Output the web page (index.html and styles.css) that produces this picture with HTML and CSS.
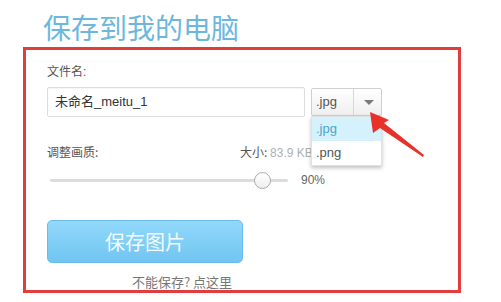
FILE: index.html
```html
<!DOCTYPE html>
<html lang="zh-CN">
<head>
<meta charset="utf-8">
<link rel="stylesheet" href="styles.css">
</head>
<body>
<div class="page">
  <h1 class="title">保存到我的电脑</h1>
  <div class="box">
    <div class="label">文件名:</div>
    <div class="file-row">
      <div class="input">未命名_meitu_1</div>
      <div class="select-wrap">
        <div class="select">
          <span class="select-value">.jpg</span>
          <span class="select-btn"><span class="tri"></span></span>
        </div>
        <ul class="menu">
          <li class="item active">.jpg</li>
          <li class="item">.png</li>
        </ul>
      </div>
    </div>
    <div class="quality-row">
      <span class="quality-label">调整画质:</span>
      <span class="size">大小: <span class="size-val">83.9 KB</span></span>
    </div>
    <div class="slider-row">
      <div class="track"><span class="thumb"></span></div>
      <span class="pct">90%</span>
    </div>
    <button class="save-btn">保存图片</button>
    <div class="help">不能保存? 点这里</div>
  </div>
  <svg class="arrow" width="80" height="60" viewBox="360 95 80 60">
    <polygon points="370,103 389,111 384,114 424,146 423,148 380,119 373,124" fill="#e8312b"/>
  </svg>
</div>
</body>
</html>
```
FILE: styles.css
```css
html, body {
  margin: 0;
  padding: 0;
  background: #ffffff;
}
body {
  width: 501px;
  height: 302px;
  overflow: hidden;
  font-family: "Liberation Sans", "Noto Sans CJK SC", sans-serif;
  color: #555;
}
.page {
  position: relative;
  width: 501px;
  height: 302px;
}
.title {
  margin: 9px 0 0 43px;
  font-family: "Noto Sans CJK SC", sans-serif;
  font-weight: 400;
  font-size: 28px;
  line-height: 36px;
  height: 36px;
  color: #6db7dd;
}
.box {
  margin: 2px 0 0 23px;
  width: 411px;
  height: 240px;
  border: 3px solid #e23c3c;
  padding: 0 0 0 21px;
}
.label {
  margin-top: 14px;
  font-size: 12px;
  line-height: 16px;
  color: #555;
}
.file-row {
  margin-top: 7px;
  display: flex;
  align-items: center;
  gap: 6px;
}
.input {
  width: 249px;
  height: 28px;
  border: 1px solid #ddd;
  border-radius: 2px;
  padding-left: 7px;
  font-size: 13px;
  line-height: 28px;
  color: #333;
  box-shadow: inset 0 1px 1px rgba(0,0,0,0.04);
}
.select-wrap {
  position: relative;
  z-index: 2;
}
.select {
  display: flex;
  width: 69px;
  height: 26px;
  border: 1px solid #cfcfcf;
  border-radius: 2px;
  background: linear-gradient(#ffffff, #efefef);
}
.select-value {
  width: 37px;
  padding-left: 4px;
  border-right: 1px solid #d8d8d8;
  font-size: 13px;
  line-height: 26px;
  color: #555;
}
.select-btn {
  flex: 1;
  display: flex;
  align-items: center;
  justify-content: center;
  padding-left: 3px;
}
.tri {
  width: 0;
  height: 0;
  border-left: 5px solid transparent;
  border-right: 5px solid transparent;
  border-top: 5px solid #7a7a7a;
}
.menu {
  position: absolute;
  left: 0;
  top: 28px;
  width: 71px;
  margin: 0;
  padding: 0;
  list-style: none;
  background: #fff;
  border: 1px solid #e2e2e2;
  box-sizing: border-box;
  box-shadow: 0 2px 4px rgba(0,0,0,0.25);
}
.item {
  height: 24px;
  line-height: 24px;
  padding-left: 4px;
  font-size: 13px;
  color: #555;
}
.item.active {
  background: #d5f1fb;
  color: #4aa6cf;
}
.quality-row {
  margin-top: 27px;
  display: flex;
  font-family: "Noto Sans CJK SC", sans-serif;
  font-size: 12px;
  line-height: 16px;
  white-space: nowrap;
}
.quality-label {
  width: 193px;
  color: #555;
}
.size {
  font-weight: 400;
  color: #555;
}
.size-val {
  font-family: "Liberation Sans", sans-serif;
  color: #b0b0b0;
}
.slider-row {
  margin-top: 11px;
  display: flex;
  align-items: center;
  height: 16px;
}
.track {
  position: relative;
  margin-left: 3px;
  width: 238px;
  height: 3px;
  background: #dcdcdc;
  border-radius: 2px;
}
.thumb {
  position: absolute;
  left: 204px;
  top: -7px;
  width: 15px;
  height: 15px;
  border: 1px solid #a9a9a9;
  border-radius: 50%;
  background: linear-gradient(#ffffff, #eeeeee);
}
.pct {
  margin-left: 13px;
  font-size: 12px;
  color: #666;
}
.save-btn {
  display: block;
  margin-top: 32px;
  width: 196px;
  height: 43px;
  border: 1px solid #6bbce8;
  border-radius: 5px;
  background: linear-gradient(#92d8fb, #70c5f1);
  color: #f4fbff;
  font-family: "Noto Sans CJK SC", sans-serif;
  font-size: 20px;
  line-height: 41px;
  padding: 0;
}
.help {
  margin-top: 12px;
  margin-left: 85px;
  font-family: "Noto Sans CJK SC", sans-serif;
  font-size: 13px;
  line-height: 14px;
  color: #777;
}
.arrow {
  position: absolute;
  left: 360px;
  top: 95px;
  z-index: 3;
}
```
